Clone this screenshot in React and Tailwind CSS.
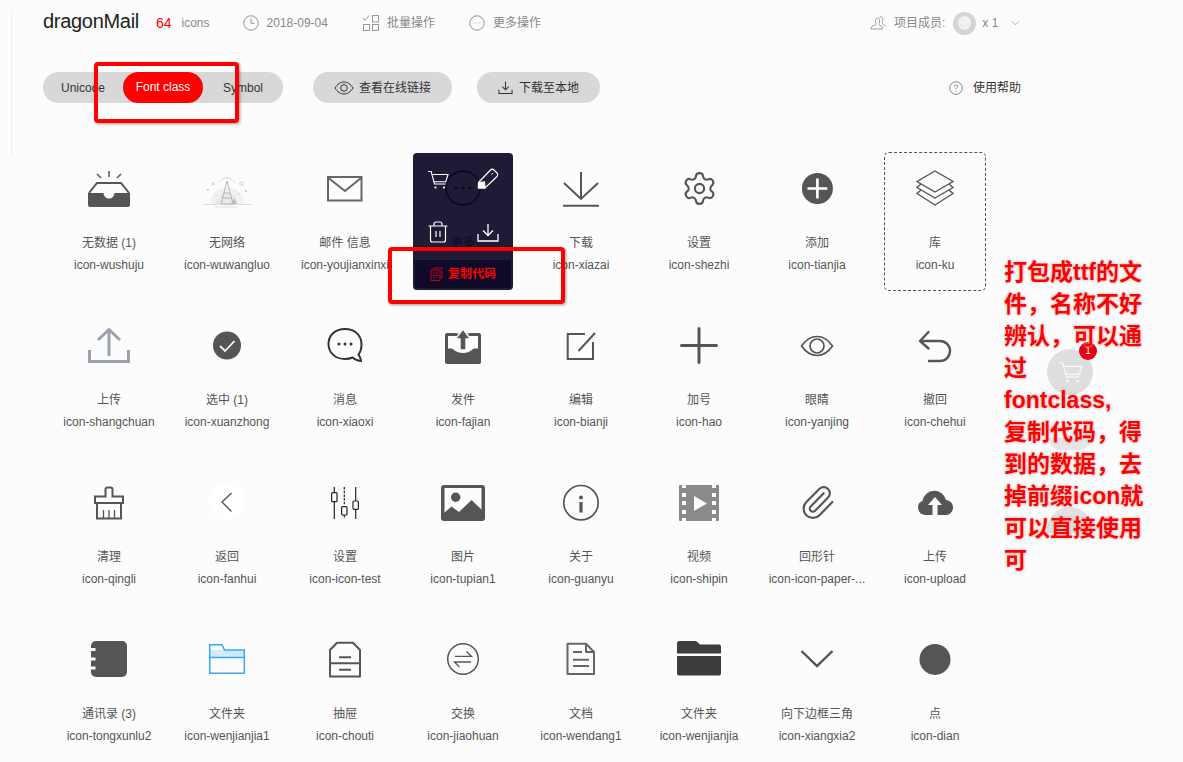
import { Settings, Paperclip } from 'lucide-react';

const Ico = ({ children }) => (
  <svg viewBox="0 0 50 50" className="w-[50px] h-[50px]" fill="none" stroke="#555" strokeWidth="2">
    {children}
  </svg>
);

const Cart = ({ className, color = '#fff' }) => (
  <svg viewBox="0 0 22 20" className={className} fill="none" stroke={color} strokeWidth="1.1">
    <path d="M1 1.5h3.2L7.5 14h11.2" />
    <path d="M4.8 4.5H21l-2.2 7.2H7" />
    <circle cx="8.5" cy="17.5" r="1.1" fill={color} stroke="none" />
    <circle cx="17" cy="17.5" r="1.1" fill={color} stroke="none" />
  </svg>
);

const icons = {
  wushuju: (
    <Ico>
      <path d="M5 30 L13 20 H37 L45 30" />
      <path d="M4 30 H19.5 A5.5 5.5 0 0 0 30.5 30 H46 V42 a2 2 0 0 1 -2 2 H6 a2 2 0 0 1 -2 -2 Z" fill="#555" stroke="none" />
      <path d="M25 8 V14 M13 11 L17 15 M37 11 L33 15" strokeWidth="1.5" />
    </Ico>
  ),
  wuwangluo: (
    <Ico>
      <path d="M8 41 A17 17 0 0 1 42 41 Z" fill="#f1f1f1" stroke="none" />
      <path d="M14 41 A11 11 0 0 1 36 41 Z" fill="#e8e8e8" stroke="none" />
      <path d="M1 41.5 H49 M13 44 H36" stroke="#ddd" strokeWidth="1" />
      <path d="M25 18 L19 41 H31 Z M21.5 30 H28.5 M20.5 35 H29.5" stroke="#aaa" strokeWidth="0.8" />
      <path d="M17 20 A9 9 0 0 1 33 20 M20 17 A6 6 0 0 1 30 17" stroke="#ccc" strokeWidth="0.6" />
      <path d="M29 41 L32 35 L35 41 Z" fill="#bbb" stroke="none" />
      <rect x="10" y="20" width="2" height="2" stroke="#bbb" strokeWidth="0.6" />
      <rect x="38" y="19" width="3" height="3" stroke="#bbb" strokeWidth="0.6" />
      <circle cx="6" cy="27" r="0.8" fill="#999" stroke="none" />
      <circle cx="44" cy="28" r="0.8" fill="#999" stroke="none" />
      <circle cx="14" cy="32" r="0.6" fill="#aaa" stroke="none" />
      <circle cx="37" cy="31" r="0.6" fill="#aaa" stroke="none" />
    </Ico>
  ),
  mail: (
    <Ico>
      <rect x="8" y="14" width="33.5" height="23.5" stroke="#666" />
      <path d="M8.5 15 L25 28 L41 15" stroke="#666" />
    </Ico>
  ),
  more: (
    <Ico>
      <circle cx="25" cy="25" r="17" />
      <circle cx="18" cy="25" r="1.6" fill="#555" stroke="none" />
      <circle cx="25" cy="25" r="1.6" fill="#555" stroke="none" />
      <circle cx="32" cy="25" r="1.6" fill="#555" stroke="none" />
    </Ico>
  ),
  download: (
    <Ico>
      <path d="M25 9 V35 M8 20 L25 36 L42 20" />
      <path d="M7 42.7 H43" />
    </Ico>
  ),
  gear: <Settings size={37} strokeWidth={1.35} color="#555" />,
  add: (
    <Ico>
      <circle cx="25.4" cy="25.5" r="15.5" fill="#555" stroke="none" />
      <path d="M15.5 25.5 H35.3 M25.4 15.6 V35.4" stroke="#fff" strokeWidth="2.6" />
    </Ico>
  ),
  layers: (
    <Ico>
      <path d="M25 8 L43 18.5 L25 29 L7 18.5 Z" strokeWidth="1.4" />
      <path d="M11 21 L7 24.5 L25 35 L43 24.5 L39 21" strokeWidth="1.4" />
      <path d="M11 27 L7 30.5 L25 42 L43 30.5 L39 27" strokeWidth="1.4" />
    </Ico>
  ),
  upload: (
    <Ico>
      <path d="M5.5 30 V41.5 H44.5 V30 M25 36 V10 M14 20 L25 9.5 L36 20" stroke="#9aa3ad" strokeWidth="3" />
    </Ico>
  ),
  check: (
    <Ico>
      <circle cx="25" cy="25.5" r="14" fill="#555" stroke="none" />
      <path d="M18 26 L23 31 L32.5 21" stroke="#fff" strokeWidth="1.8" />
    </Ico>
  ),
  message: (
    <Ico>
      <path d="M25 9 C15 9 8.5 15.5 8.5 24 C8.5 33 15.5 39 25 39 C28 39 30.5 38.5 32.5 37.5 C35 39.5 38 41 41 41 C41 38.5 39.5 36.5 38.5 34.5 C40.5 32 41.5 28.5 41.5 24.5 C41.5 15.5 35 9 25 9 Z" stroke="#333" />
      <circle cx="19" cy="24" r="1.5" fill="#333" stroke="none" />
      <circle cx="25" cy="24" r="1.5" fill="#333" stroke="none" />
      <circle cx="31" cy="24" r="1.5" fill="#333" stroke="none" />
    </Ico>
  ),
  send: (
    <Ico>
      <rect x="7" y="13" width="36" height="31" rx="2" fill="#555" stroke="none" />
      <path d="M10 16 H40 V28.5 H36.5 C34 28.5 33 33 25 33 C17 33 16 28.5 13.5 28.5 H10 Z" fill="#fcfcfc" stroke="none" />
      <path d="M18.5 10 H31.5 V13.5 H18.5 Z" fill="#fcfcfc" stroke="none" />
      <path d="M22 30 V19 H17.5 L25 9 L32.5 19 H28 V30 Z" fill="#555" stroke="#fcfcfc" strokeWidth="1.4" />
    </Ico>
  ),
  edit: (
    <Ico>
      <path d="M29 14 H11.7 V39 H37 V22" />
      <path d="M22.5 31 L39 13" />
    </Ico>
  ),
  plus: (
    <Ico>
      <path d="M7.5 25.5 H42.5 M25 8.5 V42.5" strokeWidth="3" strokeLinecap="round" />
    </Ico>
  ),
  eye: (
    <Ico>
      <path d="M9.5 26 C14 19.5 19 16.5 25 16.5 C31 16.5 36 19.5 40.5 26 C36 32.5 31 35.5 25 35.5 C19 35.5 14 32.5 9.5 26 Z" strokeWidth="1.7" />
      <circle cx="25" cy="26" r="7" strokeWidth="1.7" />
    </Ico>
  ),
  undo: (
    <Ico>
      <path d="M18.5 12 L10 21 L18.5 28.5 M10.5 21 H30 A10 10 0 0 1 30 41 H19" strokeWidth="2.4" strokeLinecap="round" strokeLinejoin="round" />
    </Ico>
  ),
  brush: (
    <Ico>
      <path d="M21.5 19.5 V12.5 A2 2 0 0 1 23.5 10.5 H26.5 A2 2 0 0 1 28.5 12.5 V19.5 H39 V26 H11 V19.5 Z" />
      <path d="M13 26 V41.5 H37 V26" />
      <path d="M19.5 33 V41 M25 33 V41 M30.5 33 V41" strokeWidth="1.3" />
    </Ico>
  ),
  back: (
    <div className="w-9 h-9 rounded-full bg-white flex items-center justify-center">
      <svg viewBox="0 0 36 36" className="w-9 h-9" fill="none" stroke="#555" strokeWidth="1.4">
        <path d="M22.5 9 L13 18 L22.5 27.5" />
      </svg>
    </div>
  ),
  sliders: (
    <Ico>
      <g stroke="#222" strokeWidth="1.2" fill="#fcfcfc">
        <path d="M14.3 10 V42" />
        <path d="M24.3 10 V28 M24.3 38 V42" strokeDasharray="2.5 1.2" />
        <path d="M35.7 10 V42" />
        <rect x="11.6" y="15.7" width="5.4" height="9" rx="1" />
        <rect x="21.6" y="29.7" width="5.4" height="8.3" rx="1" />
        <rect x="33" y="24" width="5.4" height="8.3" rx="1" />
      </g>
    </Ico>
  ),
  image: (
    <Ico>
      <rect x="3" y="8" width="44" height="36" rx="3" fill="#555" stroke="none" />
      <rect x="6.5" y="11" width="37" height="27" fill="#fcfcfc" stroke="none" />
      <circle cx="17.7" cy="20.3" r="4.7" fill="#555" stroke="none" />
      <path d="M6 36 L13.5 29.5 L21 35 L33.5 23 L44 33 V39 H6 Z" fill="#555" stroke="none" />
    </Ico>
  ),
  info: (
    <Ico>
      <circle cx="25" cy="25.7" r="17.2" strokeWidth="1.7" />
      <circle cx="25" cy="20.5" r="2" fill="#555" stroke="none" />
      <path d="M25 25 V35.5" strokeWidth="3.2" />
    </Ico>
  ),
  video: (
    <Ico>
      <rect x="5" y="8" width="40" height="36" rx="1" fill="#8a8a8a" stroke="none" />
      <g fill="#fcfcfc" stroke="none">
        <rect x="8" y="8" width="4" height="3" />
        <rect x="8" y="16" width="4" height="4" />
        <rect x="8" y="24" width="4" height="4" />
        <rect x="8" y="33" width="4" height="4" />
        <rect x="8" y="41" width="4" height="3" />
        <rect x="38" y="8" width="4" height="3" />
        <rect x="38" y="16" width="4" height="4" />
        <rect x="38" y="24" width="4" height="4" />
        <rect x="38" y="33" width="4" height="4" />
        <rect x="38" y="41" width="4" height="3" />
        <path d="M20 19 L33 26.5 L20 34 Z" />
      </g>
    </Ico>
  ),
  clip: <Paperclip size={37} strokeWidth={1.4} color="#555" />,
  cloud: (
    <Ico>
      <path d="M15 38 A7.5 7.5 0 0 1 12.5 23.7 A12 12 0 0 1 36 23 A7.5 7.5 0 0 1 35 38 Z" fill="#555" stroke="none" />
      <path d="M25 20 L32 28 H27.5 V38 H22.5 V28 H18 Z" fill="#fcfcfc" stroke="none" />
    </Ico>
  ),
  book: (
    <Ico>
      <rect x="7" y="7" width="36" height="36" rx="5" fill="#555" stroke="none" />
      <g fill="#fcfcfc" stroke="none">
        <rect x="6.5" y="14" width="5" height="3" />
        <rect x="6.5" y="23.5" width="5" height="3" />
        <rect x="6.5" y="32.5" width="5" height="3" />
      </g>
    </Ico>
  ),
  folderBlue: (
    <Ico>
      <path d="M8 16 H42 V23 H8 Z" fill="#cfeafc" stroke="none" />
      <path d="M7.7 39.3 V10.7 H20 L22.5 16 H42.3 V39.3 Z M8 23.5 H42" stroke="#3ba6f5" strokeWidth="1.5" />
    </Ico>
  ),
  drawer: (
    <Ico>
      <path d="M10 16 L17 8.7 H33 L40 16 V42.5 H10 Z M10 29.3 H40" strokeLinejoin="round" />
      <path d="M19 23.3 H31 M19 35.7 H31" />
    </Ico>
  ),
  swap: (
    <Ico>
      <circle cx="25" cy="25" r="15.3" strokeWidth="1.5" />
      <path d="M17 22.3 H33.5 L28.5 17.5 M33 28 H16.5 L21.5 33" strokeWidth="1.3" />
    </Ico>
  ),
  doc: (
    <Ico>
      <path d="M11.5 9.7 H30 L38 18 V40 H11.5 Z M30 10 V18 H38" stroke="#666" strokeLinejoin="round" />
      <path d="M17 18 H26 M17 25.7 H33 M17 32 H33" stroke="#666" />
    </Ico>
  ),
  folder: (
    <Ico>
      <path d="M3 19.5 V9.5 A2.5 2.5 0 0 1 5.5 7 H22 L26 10.5 H45 A2 2 0 0 1 47 12.5 V19.5 Z" fill="#3d3d3d" stroke="none" />
      <path d="M3 22 H47 V39.5 A2 2 0 0 1 45 41.5 H5 A2 2 0 0 1 3 39.5 Z" fill="#3d3d3d" stroke="none" />
    </Ico>
  ),
  chevron: (
    <Ico>
      <path d="M9.5 17 L25 32 L40.5 17" strokeWidth="2.4" />
    </Ico>
  ),
  dot: (
    <Ico>
      <circle cx="25" cy="25.4" r="15.5" fill="#555" stroke="none" />
    </Ico>
  ),
};

const items = [
  ['无数据 (1)', 'icon-wushuju', 'wushuju'],
  ['无网络', 'icon-wuwangluo', 'wuwangluo'],
  ['邮件 信息', 'icon-youjianxinxi', 'mail'],
  ['更多', 'icon-gengduo', 'more'],
  ['下载', 'icon-xiazai', 'download'],
  ['设置', 'icon-shezhi', 'gear'],
  ['添加', 'icon-tianjia', 'add'],
  ['库', 'icon-ku', 'layers'],
  ['上传', 'icon-shangchuan', 'upload'],
  ['选中 (1)', 'icon-xuanzhong', 'check'],
  ['消息', 'icon-xiaoxi', 'message'],
  ['发件', 'icon-fajian', 'send'],
  ['编辑', 'icon-bianji', 'edit'],
  ['加号', 'icon-hao', 'plus'],
  ['眼睛', 'icon-yanjing', 'eye'],
  ['撤回', 'icon-chehui', 'undo'],
  ['清理', 'icon-qingli', 'brush'],
  ['返回', 'icon-fanhui', 'back'],
  ['设置', 'icon-icon-test', 'sliders'],
  ['图片', 'icon-tupian1', 'image'],
  ['关于', 'icon-guanyu', 'info'],
  ['视频', 'icon-shipin', 'video'],
  ['回形针', 'icon-icon-paper-...', 'clip'],
  ['上传', 'icon-upload', 'cloud'],
  ['通讯录 (3)', 'icon-tongxunlu2', 'book'],
  ['文件夹', 'icon-wenjianjia1', 'folderBlue'],
  ['抽屉', 'icon-chouti', 'drawer'],
  ['交换', 'icon-jiaohuan', 'swap'],
  ['文档', 'icon-wendang1', 'doc'],
  ['文件夹', 'icon-wenjianjia', 'folder'],
  ['向下边框三角', 'icon-xiangxia2', 'chevron'],
  ['点', 'icon-dian', 'dot'],
];

const note = [
  '打包成ttf的文',
  '件，名称不好',
  '辨认，可以通',
  '过',
  'fontclass,',
  '复制代码，得',
  '到的数据，去',
  '掉前缀icon就',
  '可以直接使用',
  '可',
];

function IconCard({ label, name, icon }) {
  const active = name === 'icon-ku';
  return (
    <div
      className={`w-[102px] h-[139px] pt-[11px] flex flex-col items-center rounded-[5px] border border-dashed ${
        active ? 'border-[#555]' : 'border-transparent'
      }`}
    >
      <div className="w-[50px] h-[50px] -mt-px flex items-center justify-center">{icons[icon]}</div>
      <div className="mt-[22px] h-4 leading-4 text-xs text-[#555] whitespace-nowrap">{label}</div>
      <div className="mt-[6px] h-4 leading-4 text-xs text-[#555] whitespace-nowrap">{name}</div>
    </div>
  );
}

function Header() {
  return (
    <div className="flex items-center h-[26px] text-xs text-[#888]">
      <span className="mb-1 h-6 text-[20px] leading-6 text-[#222] tracking-[-0.3px]">dragonMail</span>
      <span className="ml-[17px] text-sm text-[#f00]">64</span>
      <span className="ml-[10px]">icons</span>
      <svg viewBox="0 0 16 16" className="ml-[33px] w-4 h-4" fill="none" stroke="#888" strokeWidth="0.9">
        <circle cx="8" cy="8" r="7.2" />
        <path d="M8 3.8 V8.3 H11.5" />
      </svg>
      <span className="ml-2">2018-09-04</span>
      <svg viewBox="0 0 18 18" className="ml-[34px] w-[18px] h-[18px]" fill="none" stroke="#999" strokeWidth="1">
        <path d="M1 4 L3 6.5 L7 1.5" />
        <rect x="10.5" y="1.5" width="6" height="6.5" />
        <rect x="1.5" y="10.5" width="6" height="6" />
        <rect x="10.5" y="10.5" width="6" height="6" />
      </svg>
      <span className="ml-[7px]">批量操作</span>
      <svg viewBox="0 0 16 16" className="ml-[34px] w-4 h-4" fill="none" stroke="#888" strokeWidth="0.9">
        <circle cx="8" cy="8" r="7.2" />
        <path d="M4.8 8 h.6 M7.7 8 h.6 M10.6 8 h.6" strokeWidth="1.2" />
      </svg>
      <span className="ml-2">更多操作</span>
      <svg viewBox="0 0 16 16" className="ml-[329px] w-4 h-4" fill="none" stroke="#888" strokeWidth="0.8">
        <path d="M4 10.5 C6 10 6.5 9.5 6 8.5 C5 7 5 3 7.5 3 C10 3 10 7 9 8.5 C8.5 9.5 9 10 11 10.8 C12 11.2 12.5 12.5 12.5 14 H1 C1 12.5 2 11 4 10.5 Z" />
        <path d="M9.5 2 C12.5 1 13.5 4 12.5 7.5 C12 9 13 9.5 15.5 11" />
      </svg>
      <span className="ml-2">项目成员:</span>
      <div className="ml-2 w-[23px] h-[23px] rounded-full bg-[#d4d4d4] flex items-start justify-center overflow-hidden">
        <div className="mt-[4px] w-[13px] h-[14px] rounded-full bg-[#f0f0f0]" />
      </div>
      <span className="ml-[6px]">x 1</span>
      <svg viewBox="0 0 10 6" className="ml-[13px] w-[9px] h-[6px]" fill="none" stroke="#999" strokeWidth="0.9">
        <path d="M1 1 L5 5 L9 1" />
      </svg>
    </div>
  );
}

function Toolbar() {
  return (
    <div className="mt-[36px] flex items-center text-xs text-[#333]">
      <div className="w-[240px] h-[31px] rounded-full bg-[#d8d8d8] flex items-center">
        <span className="w-20 text-center">Unicode</span>
        <span className="w-20 h-[31px] leading-[31px] rounded-full bg-[#fe0000] text-white text-center">Font class</span>
        <span className="w-20 text-center">Symbol</span>
      </div>
      <div className="ml-[30px] w-[139px] h-[31px] rounded-full bg-[#d8d8d8] flex items-center justify-center gap-[5px]">
        <svg viewBox="0 0 20 14" className="w-5 h-[14px]" fill="none" stroke="#333" strokeWidth="1">
          <path d="M1 7 C3.5 3 6.5 1 10 1 C13.5 1 16.5 3 19 7 C16.5 11 13.5 13 10 13 C6.5 13 3.5 11 1 7 Z" />
          <circle cx="10" cy="7" r="3.3" />
        </svg>
        <span>查看在线链接</span>
      </div>
      <div className="ml-[25px] w-[123px] h-[31px] rounded-full bg-[#d8d8d8] flex items-center justify-center gap-[6px]">
        <svg viewBox="0 0 16 15" className="w-[15px] h-[15px]" fill="none" stroke="#333" strokeWidth="1.1">
          <path d="M8 1 V10 M4.5 6.5 L8 10 L11.5 6.5" />
          <path d="M1 10 V14 H15 V10" />
        </svg>
        <span>下载至本地</span>
      </div>
      <svg viewBox="0 0 14 14" className="ml-[349px] w-[14px] h-[14px]" fill="none" stroke="#666" strokeWidth="0.8">
        <circle cx="7" cy="7" r="6.3" />
        <path d="M5.4 5.6 C5.4 3.6 8.7 3.6 8.7 5.5 C8.7 6.8 7 6.7 7 8.3" />
        <circle cx="7" cy="10" r="0.5" fill="#666" stroke="none" />
      </svg>
      <span className="ml-[10px]">使用帮助</span>
    </div>
  );
}

function Popup() {
  return (
    <div className="absolute left-[413px] top-[153px] w-[100px] h-[137px] rounded-[4px] bg-[rgba(5,2,32,0.9)] flex flex-col">
      <div className="mt-px grid grid-cols-2 grid-rows-[52px_52px] h-[104px]">
        <div className="flex items-center justify-center">
          <Cart className="w-[22px] h-5" />
        </div>
        <div className="flex items-center justify-center">
          <svg viewBox="0 0 22 21" className="-mt-1 w-[22px] h-[21px]" fill="none" stroke="#fff" strokeWidth="1.2">
            <path d="M1.5 14.5 L13 2.5 C14.5 1 16 1 17 2 L20 5 C21 6 21 7.5 19.5 9 L8 20 H1.5 Z" />
            <path d="M1.5 14.5 L7.5 14 L8 20 L1.5 20 Z" fill="#fff" />
            <path d="M14.5 6.5 L16 5" strokeWidth="1" />
          </svg>
        </div>
        <div className="flex items-center justify-center">
          <svg viewBox="0 0 20 22" className="w-5 h-[22px]" fill="none" stroke="#fff" strokeWidth="1.2">
            <path d="M0.5 5 H19.5 M6 5 V3 A2 2 0 0 1 8 1 H12 A2 2 0 0 1 14 3 V5" />
            <path d="M2.5 5 V19 A2 2 0 0 0 4.5 21 H15.5 A2 2 0 0 0 17.5 19 V5" />
            <path d="M8 10 V16 M12 10 V16" />
          </svg>
        </div>
        <div className="flex items-center justify-center">
          <svg viewBox="0 0 22 19" className="w-[22px] h-[19px]" fill="none" stroke="#fff" strokeWidth="1.3">
            <path d="M11 1 V12 M6 7.5 L11 12.5 L16 7.5" />
            <path d="M1 11 V18 H21 V11" />
          </svg>
        </div>
      </div>
      <div className="mx-[2px] mt-[2px] h-[28px] bg-[#0e0a28] flex items-center justify-center gap-[5px]">
        <svg viewBox="0 0 13 14" className="w-[13px] h-[14px]" fill="none" stroke="#c0001a" strokeWidth="1">
          <path d="M3 2.5 V1 H12 V11 H10.5" />
          <path d="M1 3 H10 V13.5 H1 Z M3 6 H8 M3 8.5 H8 M3 11 H6" />
        </svg>
        <span className="text-xs font-bold text-[#fe0000]">复制代码</span>
      </div>
    </div>
  );
}

function FloatingTools() {
  return (
    <>
      <div className="absolute left-[1047px] top-[349px] w-[46px] h-[46px] rounded-full bg-[#dedede] flex items-center justify-center">
        <Cart className="w-[25px] h-[23px]" color="#fafafa" />
      </div>
      <div className="absolute left-[1079px] top-[342px] w-[18px] h-[18px] rounded-full bg-[#e60012] text-white text-[10px] leading-[18px] text-center">
        1
      </div>
      <div className="absolute left-[1049px] top-[438px] w-[42px] h-[12px] rounded-b-full bg-[#e6e6e6]" />
      <div className="absolute left-[1047px] top-[507px] w-[46px] h-[26px] rounded-t-full bg-[#e2e2e2]" />
    </>
  );
}

export default function App() {
  return (
    <div className="relative w-full h-[762px] overflow-hidden bg-[#fcfcfc] font-['Liberation_Sans','Noto_Sans_CJK_SC',sans-serif]">
      <div className="mt-[10px] ml-[11px] h-[147px] -mb-[5px] pl-[31px] border-l border-[#eeeeee]">
        <Header />
        <Toolbar />
      </div>

      <div className="ml-[58px] grid grid-cols-[repeat(8,102px)] gap-x-4 gap-y-[18px]">
        {items.map(([label, name, icon]) => (
          <IconCard key={name} label={label} name={name} icon={icon} />
        ))}
      </div>

      <Popup />

      {/* annotations drawn on top of the screenshot */}
      <div className="absolute left-[94px] top-[62px] w-[145px] h-[61px] rounded-[4px] border-[4px] border-[#fe0000] shadow-[1px_1px_3px_rgba(0,0,0,0.4)]" />
      <div className="absolute left-[388px] top-[247px] w-[177px] h-[57px] rounded-[4px] border-[4px] border-[#fe0000] shadow-[1px_1px_3px_rgba(0,0,0,0.4)]" />

      <FloatingTools />

      <div className="absolute left-[1004px] top-[256px] text-[23px] leading-8 font-bold text-[#fe0000] whitespace-nowrap [text-shadow:0_0_1px_#fff,0_0_3px_#999]">
        {note.map((line) => (
          <div key={line}>{line}</div>
        ))}
      </div>
    </div>
  );
}
